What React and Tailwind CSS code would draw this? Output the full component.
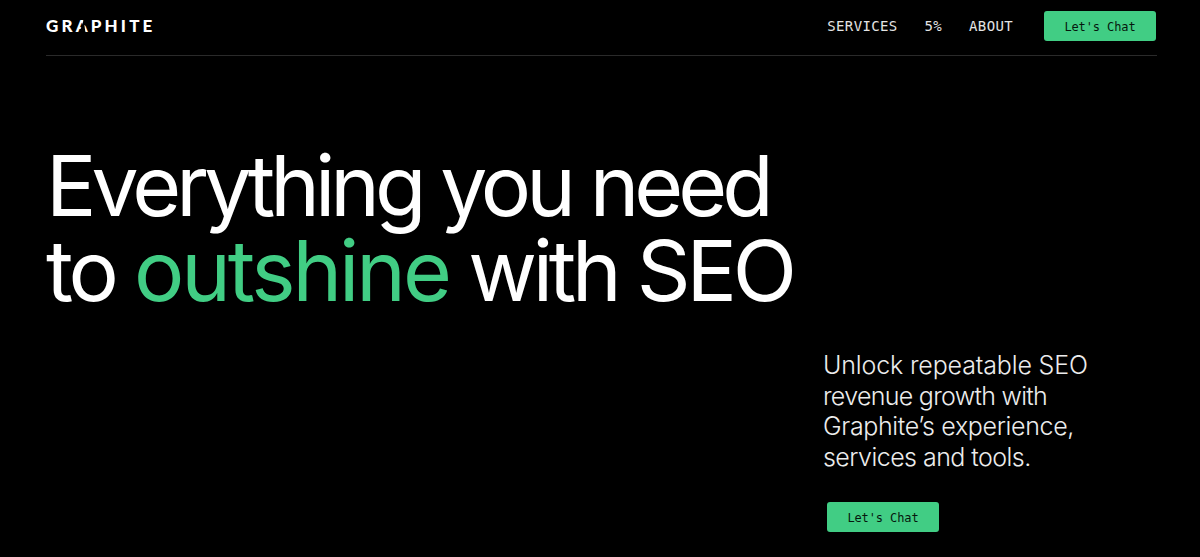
import React from 'react';

const monoFont = "font-['DejaVu_Sans_Mono','Liberation_Mono',monospace]";

const ChatButton = ({ className }) => (
  <a className={`flex items-center justify-center rounded-[3px] bg-[#41cd84] pt-[2px] text-[12px] tracking-[-0.1px] text-[#06170e] ${monoFont} ${className}`}>
    Let's Chat
  </a>
);

const App = () => {
  return (
    <div className="h-[557px] overflow-hidden bg-black pr-[43px] pl-[46px] font-['Inter',sans-serif] text-white">
      {/* Header */}
      <header className="flex h-[56px] items-center justify-between border-b border-[#2a2a2a] pr-px">
        <span className="mt-[-4px] font-['Lato',sans-serif] text-[17px] leading-none font-black tracking-[0.185em]">
          GR
          <span className="relative inline-block">
            A
            {/* the logo's A has no crossbar and a cut right leg */}
            <svg className="absolute top-0 left-0" width="14" height="17" viewBox="0 0 14 17">
              <polygon points="7.6,2 14,2 14,11 8.4,8.1 9.4,15.6 3.4,15.6 7.6,3.3" fill="#000" />
            </svg>
          </span>
          PHITE
        </span>
        <nav className={`mt-[-4px] flex items-center text-[14px] tracking-[0.35px] text-[#e4e4e4] ${monoFont}`}>
          <a className="pt-[2px]">SERVICES</a>
          <a className="ml-[27px] pt-[2px]">5%</a>
          <a className="ml-[27px] pt-[2px]">ABOUT</a>
          <ChatButton className="ml-[31px] h-[30px] w-[112px]" />
        </nav>
      </header>

      {/* Hero */}
      <h1 className="mt-[87px] text-[84px] leading-[85px] font-[370] text-white">
        <span className="block tracking-[-4.95px]">Everything you need</span>
        <span className="block tracking-[-4.25px]">
          to <span className="tracking-[-3.1px] text-[#41cd84]">outshine</span> with SEO
        </span>
      </h1>

      <div className="mt-[37px] ml-[777px] w-[300px]">
        <p className="text-[25px] leading-[30.5px] font-light text-[#ececec]">
          <span className="block tracking-[-0.15px]">Unlock repeatable SEO</span>
          <span className="block tracking-[-0.7px]">revenue growth with</span>
          <span className="block tracking-[-0.35px]">Graphite’s experience,</span>
          <span className="block tracking-[-0.55px]">services and tools.</span>
        </p>
        <ChatButton className="mt-[30px] ml-[4px] h-[30px] w-[112px]" />
      </div>
    </div>
  );
};

export default App;
